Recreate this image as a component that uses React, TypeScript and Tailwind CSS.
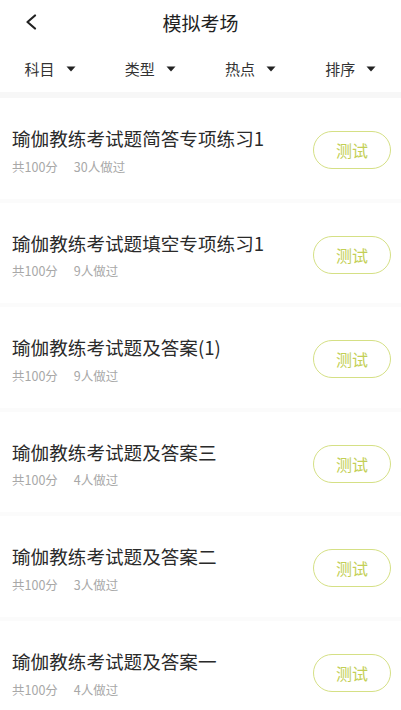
import React from "react";

const items = [
  { title: "瑜伽教练考试题简答专项练习1", count: "30人做过" },
  { title: "瑜伽教练考试题填空专项练习1", count: "9人做过" },
  { title: "瑜伽教练考试题及答案(1)", count: "9人做过" },
  { title: "瑜伽教练考试题及答案三", count: "4人做过" },
  { title: "瑜伽教练考试题及答案二", count: "3人做过" },
  { title: "瑜伽教练考试题及答案一", count: "4人做过" },
];

const filters = ["科目", "类型", "热点", "排序"];

export default function App() {
  return (
    <div
      className="w-[401px] h-[710px] overflow-hidden bg-white"
      style={{ fontFamily: '"Noto Sans CJK SC", "Noto Sans", sans-serif' }}
    >
      <div className="relative h-[44px] flex items-center justify-center">
        <svg
          className="absolute left-[24px] top-[14px]"
          width="14"
          height="16"
          viewBox="0 0 14 16"
        >
          <path d="M11 1.5 L3.5 8 L11 14.5" fill="none" stroke="#222" strokeWidth="2.2" strokeLinecap="round" strokeLinejoin="round" />
        </svg>
        <span className="text-[19px] text-[#222] leading-none">模拟考场</span>
      </div>
      <div className="h-[48px] flex">
        {filters.map((f) => (
          <div key={f} className="flex-1 flex items-center justify-center gap-[11px] pt-[1px]">
            <span className="text-[15px] text-[#333] leading-none">{f}</span>
            <svg width="10" height="6" viewBox="0 0 10 6">
              <path d="M0.5 0.5 L9.5 0.5 L5 5.5 Z" fill="#222" />
            </svg>
          </div>
        ))}
      </div>
      <div className="h-[6px] bg-[#f7f7f7]" />
      {items.map((it, i) => (
        <div key={i} className="h-[104.6px] flex items-start border-b-[4px] border-[#fbfbfb] pl-[12px] pr-[10px]">
          <div className="flex-1 flex flex-col pt-[31px]">
            <div className="text-[18.6px] text-[#2a2a2a] leading-none">{it.title}</div>
            <div className="mt-[13px] flex text-[12.5px] text-[#a8a8a8] leading-none">
              <span>共100分</span>
              <span className="ml-[16px]">{it.count}</span>
            </div>
          </div>
          <div className="w-[78px] h-[38px] rounded-full border-[1.5px] border-[#d5e085] flex items-center justify-center mt-[33px]">
            <span className="text-[16px] text-[#c3cf55] leading-none">测试</span>
          </div>
        </div>
      ))}
    </div>
  );
}
